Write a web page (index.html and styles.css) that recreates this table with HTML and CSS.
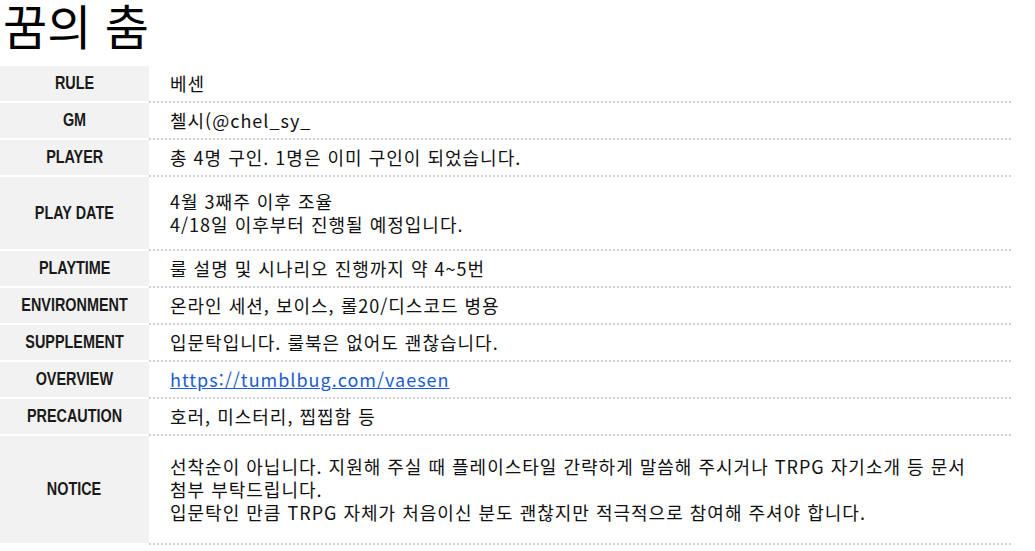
FILE: index.html
```html
<!DOCTYPE html>
<html lang="ko">
<head>
<meta charset="utf-8">
<link rel="stylesheet" href="styles.css">
</head>
<body>
<h1 class="title">꿈의 춤</h1>
<table class="info">
  <tr><th><span class="lbl">RULE</span></th><td>베센</td></tr>
  <tr><th><span class="lbl">GM</span></th><td>첼시(@chel_sy_</td></tr>
  <tr><th><span class="lbl">PLAYER</span></th><td>총 4명 구인. 1명은 이미 구인이 되었습니다.</td></tr>
  <tr><th><span class="lbl">PLAY DATE</span></th><td class="tall">4월 3째주 이후 조율<br>4/18일 이후부터 진행될 예정입니다.</td></tr>
  <tr><th><span class="lbl">PLAYTIME</span></th><td>룰 설명 및 시나리오 진행까지 약 4~5번</td></tr>
  <tr><th><span class="lbl">ENVIRONMENT</span></th><td>온라인 세션, 보이스, 롤20/디스코드 병용</td></tr>
  <tr><th><span class="lbl">SUPPLEMENT</span></th><td>입문탁입니다. 룰북은 없어도 괜찮습니다.</td></tr>
  <tr><th><span class="lbl">OVERVIEW</span></th><td><a href="#" class="link">https://tumblbug.com/vaesen</a></td></tr>
  <tr><th><span class="lbl">PRECAUTION</span></th><td>호러, 미스터리, 찝찝함 등</td></tr>
  <tr><th><span class="lbl">NOTICE</span></th><td class="taller">선착순이 아닙니다. 지원해 주실 때 플레이스타일 간략하게 말씀해 주시거나 TRPG 자기소개 등 문서<br>첨부 부탁드립니다.<br>입문탁인 만큼 TRPG 자체가 처음이신 분도 괜찮지만 적극적으로 참여해 주셔야 합니다.</td></tr>
</table>
</body>
</html>
```

FILE: styles.css
```css
html, body {
  margin: 0;
  padding: 0;
  background: #fff;
}
body {
  font-family: "Noto Sans CJK KR", "Noto Sans", sans-serif;
  color: #111;
  padding-right: 24px;
}
.title {
  margin: 0;
  padding: 0 0 0 3px;
  font-size: 48px;
  font-weight: 400;
  line-height: 48px;
  height: 64px;
  color: #000;
}
.info {
  width: 1011px;
  border-collapse: separate;
  border-spacing: 0;
  margin-top: 2px;
}
.info th {
  width: 149px;
  background: #f2f2f2;
  border-bottom: 2px solid #fff;
  font-family: "Liberation Sans", "DejaVu Sans", sans-serif;
  font-weight: 700;
  font-size: 18px;
  color: #1a1a1a;
  text-align: center;
  vertical-align: middle;
  padding: 0;
  white-space: nowrap;
}
.lbl {
  display: inline-block;
  transform: scaleX(0.8);
}
.info td {
  border-bottom: 2px dotted #d0d0d0;
  padding: 6px 10px 6px 21px;
  font-size: 18px;
  letter-spacing: 1px;
  line-height: 23px;
  height: 23px;
  vertical-align: middle;
  color: #111;
  white-space: nowrap;
}
.info td.tall {
  padding-top: 13px;
  padding-bottom: 13px;
}
.info td.taller {
  padding-top: 19px;
  padding-bottom: 19px;
}
.link {
  color: #1a5ccf;
  text-decoration: underline;
}
```
